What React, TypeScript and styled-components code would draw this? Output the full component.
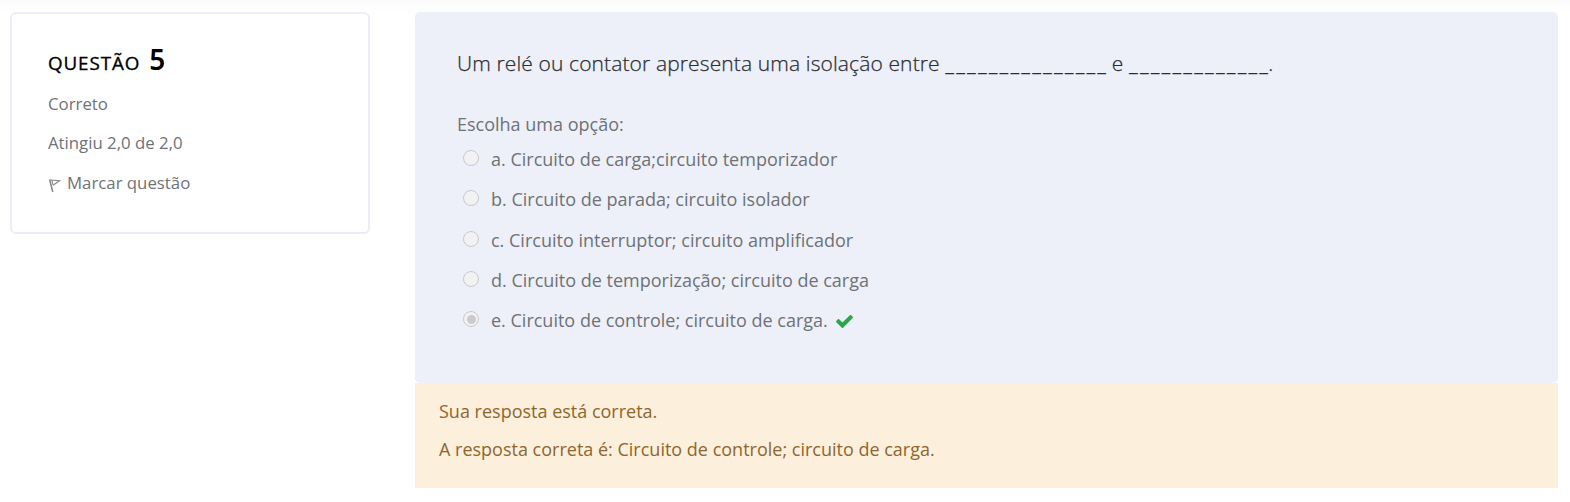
import React from "react";
import styled, { createGlobalStyle } from "styled-components";

const GlobalStyle = createGlobalStyle`
  * { box-sizing: border-box; }
  body {
    margin: 0;
    background: #fff;
    color: #6f7276;
    font-family: "Open Sans", "Noto Sans", sans-serif;
    font-size: 18px;
    line-height: 27px;
  }
`;

const Page = styled.main`
  display: flex;
  align-items: flex-start;
  gap: 45px;
  height: 502px;
  padding: 12px 12px 0 10px;
  background: linear-gradient(#fafafa, #fdfdfd 6px, #fff 14px);
  overflow: hidden;
`;

const InfoCard = styled.aside`
  width: 360px;
  height: 222px;
  padding: 29px 36px 0;
  border: 2px solid #ebeef7;
  border-radius: 6px;
  background: #fff;
  font-size: 16.8px;
`;

const InfoTitle = styled.h3`
  display: flex;
  align-items: baseline;
  gap: 9px;
  margin: 0;
  height: 34px;
  color: #000;
  font-size: 18.8px;
  font-weight: 500;
  line-height: 32px;
  letter-spacing: 0.9px;
  -webkit-text-stroke: 0.35px #000;
`;

const Number = styled.span`
  font-family: "Noto Sans", sans-serif;
  font-size: 28px;
  font-weight: 600;
  -webkit-text-stroke: 0;
`;

const InfoLine = styled.div`
  display: flex;
  align-items: center;
  height: 27px;
  margin-top: 12.5px;
`;

const FlagIcon = styled.svg`
  width: 13px;
  height: 15px;
  margin: 6px 6px 0 0;
`;

const Content = styled.section`
  flex: 1;
  min-width: 0;
`;

const Formulation = styled.div`
  height: 371px;
  padding: 35px 42px 0;
  border-radius: 5px;
  background: #edf0f8;
`;

const QuestionText = styled.p`
  margin: 0;
  color: #2b2d31;
  font-size: 21px;
  font-weight: 300;
  line-height: 32px;
  letter-spacing: 0.12px;
  white-space: nowrap;
  -webkit-text-stroke: 0.25px #2b2d31;
`;

const Blank = styled.span`
  margin-right: -2px;
  font-size: 20px;
  font-weight: 400;
  letter-spacing: 2.1px;
  -webkit-text-stroke: 0;
`;

const Prompt = styled.div`
  margin-top: 31px;
`;

const Options = styled.div`
  display: grid;
  grid-auto-rows: 40.3px;
  margin-top: 8px;
`;

const Option = styled.label`
  display: flex;
  align-items: flex-start;
  padding-left: 6px;
`;

const Radio = styled.span<{ $checked?: boolean }>`
  display: grid;
  place-items: center;
  width: 16px;
  height: 16px;
  margin: 4px 12px 0 0;
  border: 1px solid #c9c9cc;
  border-radius: 50%;
  background: #f2f2f4;

  &::after {
    content: "";
    width: 9px;
    height: 9px;
    border-radius: 50%;
    background: ${({ $checked }) => ($checked ? "#cbcbcd" : "transparent")};
  }
`;

const CheckIcon = styled.svg`
  width: 17px;
  height: 14px;
  margin: 7px 0 0 8px;
`;

const Feedback = styled.div`
  height: 105px;
  padding: 15px 24px;
  background: #fcefdc;
  color: #8e662e;
`;

const FeedbackLine = styled.p`
  margin: 0 0 11px;
`;

const options = [
  { text: "a. Circuito de carga;circuito temporizador" },
  { text: "b. Circuito de parada; circuito isolador" },
  { text: "c. Circuito interruptor; circuito amplificador" },
  { text: "d. Circuito de temporização; circuito de carga" },
  { text: "e. Circuito de controle; circuito de carga.", checked: true },
];

export default function App() {
  return (
    <>
      <GlobalStyle />
      <Page>
        <InfoCard>
          <InfoTitle>
            QUESTÃO <Number>5</Number>
          </InfoTitle>
          <InfoLine>Correto</InfoLine>
          <InfoLine>Atingiu 2,0 de 2,0</InfoLine>
          <InfoLine>
            <FlagIcon viewBox="0 0 13 15" fill="none" stroke="#85878a">
              <path d="M1.6 1.5 4.8 14" strokeWidth="1.5" />
              <path d="M2 2 11.5 2.8 5 7.2M4 2.5 5 7" strokeWidth="1.1" />
            </FlagIcon>
            Marcar questão
          </InfoLine>
        </InfoCard>
        <Content>
          <Formulation>
            <QuestionText>
              Um relé ou contator apresenta uma isolação entre{" "}
              <Blank>_______________</Blank> e <Blank>_____________</Blank>.
            </QuestionText>
            <Prompt>Escolha uma opção:</Prompt>
            <Options>
              {options.map(({ text, checked }) => (
                <Option key={text}>
                  <Radio $checked={checked} />
                  {text}
                  {checked && (
                    <CheckIcon viewBox="0 0 476 390" fill="#28a745">
                      <path d="M162 382 8 228c-10-10-10-26 0-36l44-44c10-10 26-10 36 0l92 92L388 32c10-10 26-10 36 0l44 44c10 10 10 26 0 36L198 382c-10 10-26 10-36 0z" />
                    </CheckIcon>
                  )}
                </Option>
              ))}
            </Options>
          </Formulation>
          <Feedback>
            <FeedbackLine>Sua resposta está correta.</FeedbackLine>
            <FeedbackLine>
              A resposta correta é: Circuito de controle; circuito de carga.
            </FeedbackLine>
          </Feedback>
        </Content>
      </Page>
    </>
  );
}
